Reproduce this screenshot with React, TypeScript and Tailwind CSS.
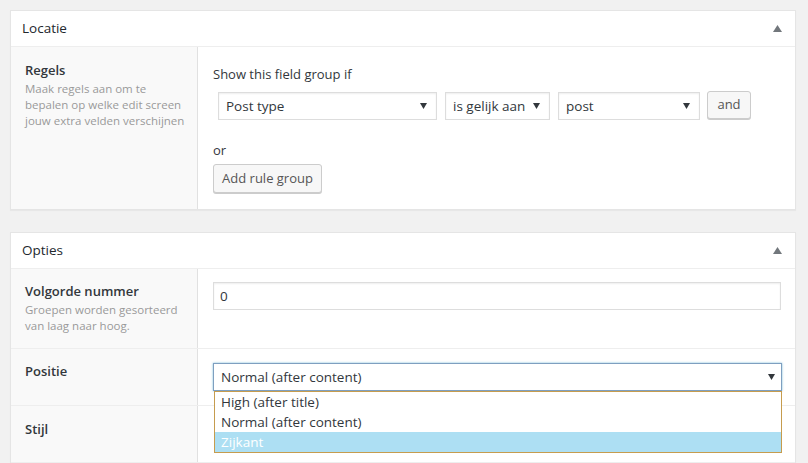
import React from 'react';

const font = { fontFamily: '"Open Sans", "Noto Sans", sans-serif' };

function Caret({ className = '' }: { className?: string }) {
  return (
    <svg width="7" height="6" viewBox="0 0 7 6" className={className}>
      <path d="M0 0h7L3.5 6z" fill="currentColor" />
    </svg>
  );
}

function UpCaret() {
  return (
    <svg width="9" height="7" viewBox="0 0 9 7" className="text-[#72777c]">
      <path d="M0 7h9L4.5 0z" fill="currentColor" />
    </svg>
  );
}

function FakeSelect({ value, className }: { value: string; className: string }) {
  return (
    <div
      className={`flex h-[28px] items-center justify-between border border-[#ddd] bg-white pl-[7px] pr-[9px] text-[13.5px] text-[#32373c] shadow-[inset_0_1px_2px_rgba(0,0,0,0.07)] ${className}`}
    >
      <span>{value}</span>
      <Caret className="text-[#32373c]" />
    </div>
  );
}

function Button({ children, className = '' }: { children: React.ReactNode; className?: string }) {
  return (
    <div
      className={`flex items-center justify-center rounded-[3px] border border-[#ccc] bg-[#f7f7f7] text-[13px] text-[#555] shadow-[0_1px_0_#ccc] ${className}`}
    >
      {children}
    </div>
  );
}

function PanelHeader({ title }: { title: string }) {
  return (
    <div className="flex h-[36px] items-center justify-between border-b border-[#eee] pl-[11px] pr-[13px]">
      <span className="text-[13.5px] text-[#23282d]">{title}</span>
      <UpCaret />
    </div>
  );
}

function Label({ title, desc }: { title: string; desc?: string[] }) {
  return (
    <div>
      <div className="text-[13px] font-semibold leading-[20px] text-[#32373c]">{title}</div>
      {desc && (
        <div className="mt-[1px] whitespace-nowrap text-[11.5px] leading-[16px] text-[#999]">
          {desc.map((line) => (
            <div key={line}>{line}</div>
          ))}
        </div>
      )}
    </div>
  );
}

export default function App() {
  return (
    <div className="h-[463px] w-[808px] overflow-hidden bg-[#f1f1f1] pl-[10px] pr-[12px] pt-[10px]" style={font}>
      {/* Locatie */}
      <div className="border border-[#e5e5e5] bg-white shadow-[0_1px_1px_rgba(0,0,0,0.04)]">
        <PanelHeader title="Locatie" />
        <div className="flex h-[162px]">
          <div className="w-[187px] shrink-0 border-r border-[#e1e1e1] bg-[#f9f9f9] pl-[14px] pt-[13px]">
            <Label
              title="Regels"
              desc={['Maak regels aan om te', 'bepalen op welke edit screen', 'jouw extra velden verschijnen']}
            />
          </div>
          <div className="flex-1 pl-[15px] pt-[17px]">
            <div className="text-[13px] leading-[20px] text-[#32373c]">Show this field group if</div>
            <div className="ml-[5px] mt-[8px] flex items-start">
              <FakeSelect value="Post type" className="w-[219px]" />
              <FakeSelect value="is gelijk aan" className="ml-[8px] w-[105px]" />
              <FakeSelect value="post" className="ml-[8px] w-[142px]" />
              <Button className="ml-[7px] h-[28px] w-[44px] -mt-[1px]">and</Button>
            </div>
            <div className="mt-[20px] text-[13px] leading-[20px] text-[#32373c]">or</div>
            <Button className="mt-[4px] h-[29px] w-[109px]">Add rule group</Button>
          </div>
        </div>
      </div>

      {/* Opties */}
      <div className="mt-[22px] border border-[#e5e5e5] bg-white shadow-[0_1px_1px_rgba(0,0,0,0.04)]">
        <PanelHeader title="Opties" />

        <div className="flex h-[80px] border-b border-[#eee]">
          <div className="w-[187px] shrink-0 border-r border-[#e1e1e1] bg-[#f9f9f9] pl-[14px] pt-[12px]">
            <Label title="Volgorde nummer" desc={['Groepen worden gesorteerd', 'van laag naar hoog.']} />
          </div>
          <div className="flex-1 pl-[15px] pr-[14px] pt-[13px]">
            <div className="flex h-[28px] items-center border border-[#ddd] bg-white pl-[6px] text-[13.5px] text-[#32373c] shadow-[inset_0_1px_2px_rgba(0,0,0,0.07)]">
              0
            </div>
          </div>
        </div>

        <div className="flex h-[57px] border-b border-[#eee]">
          <div className="w-[187px] shrink-0 border-r border-[#e1e1e1] bg-[#f9f9f9] pl-[14px] pt-[12px]">
            <Label title="Positie" />
          </div>
          <div className="relative flex-1 pl-[15px] pr-[13px] pt-[14px]">
            <div className="flex h-[28px] items-center justify-between border border-[#7e9fc0] bg-white pl-[7px] pr-[6px] text-[13.5px] text-[#32373c] shadow-[0_0_2px_rgba(30,140,190,0.6)]">
              <span>Normal (after content)</span>
              <Caret className="text-[#32373c]" />
            </div>
            <div className="absolute left-[16px] right-[13px] top-[42px] z-10 border border-[#c69c4e] bg-white text-[13.5px] leading-[20px] text-[#32373c]">
              <div className="pl-[6px]">High (after title)</div>
              <div className="pl-[6px]">Normal (after content)</div>
              <div className="bg-[#addff3] pl-[6px] text-white">Zijkant</div>
            </div>
          </div>
        </div>

        <div className="flex h-[57px] border-b border-[#eee]">
          <div className="w-[187px] shrink-0 border-r border-[#e1e1e1] bg-[#f9f9f9] pl-[14px] pt-[13px]">
            <Label title="Stijl" />
          </div>
          <div className="flex-1" />
        </div>
        <div className="flex h-[40px]">
          <div className="w-[187px] shrink-0 border-r border-[#e1e1e1] bg-[#f9f9f9]" />
          <div className="flex-1" />
        </div>
      </div>
    </div>
  );
}
